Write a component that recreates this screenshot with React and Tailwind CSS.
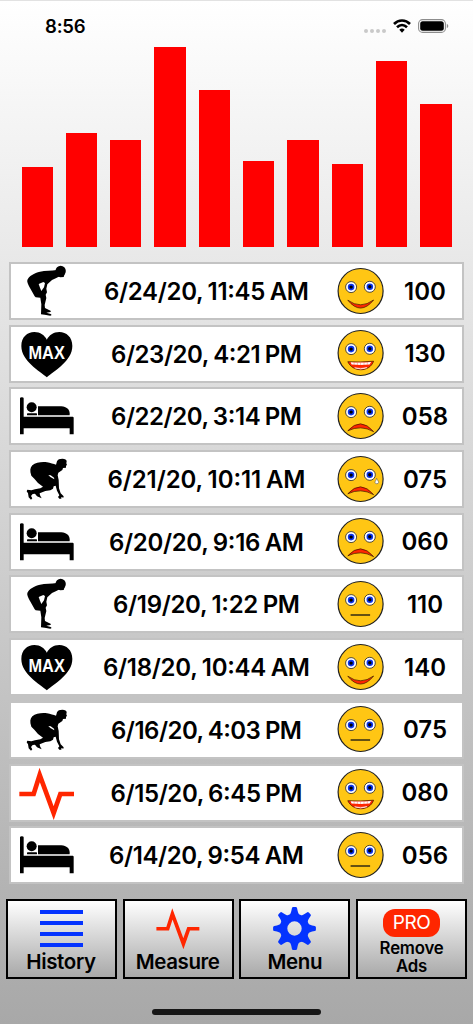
import React from 'react';

const BARS = [80, 114.5, 107.5, 200.5, 157.5, 86, 107.5, 83, 186, 143.5];

const ROWS = [
  ['bend', '6/24/20, 11:45 AM', 'smile', '100', 205],
  ['max', '6/23/20, 4:21 PM', 'grin', '130', 191],
  ['bed', '6/22/20, 3:14 PM', 'sad', '058', 191],
  ['crouch', '6/21/20, 10:11 AM', 'tear', '075', 198],
  ['bed', '6/20/20, 9:16 AM', 'sad', '060', 195],
  ['bend', '6/19/20, 1:22 PM', 'flat', '110', 187],
  ['max', '6/18/20, 10:44 AM', 'smile', '140', 207],
  ['crouch', '6/16/20, 4:03 PM', 'flat', '075', 191],
  ['pulse', '6/15/20, 6:45 PM', 'grin', '080', 192],
  ['bed', '6/14/20, 9:54 AM', 'flat', '056', 195],
];

function Bend() {
  return (
    <svg viewBox="57 24 165 168" className="h-14 w-[55px]">
      <circle cx="182" cy="48" r="15.5" />
      <path d="M168 57 L171 64 L181 67 L191 66 L194 57 L186 48 L170 47Z" />
      <path
        fillRule="evenodd"
        d="M170 45 C155 47 135 47 120 50 C103 54 86 63 82 75 C80 82 86 91 90 99 L104 124 L107 127 L121 128 L124 148 L123 178 L134 179 L151 182 L155 180 L152 177 L139 173 L151 171 L153 168 L135 159 L134 150 L139 129 L137 119 L141 112 L139 101 L142 88 L156 75 L169 69 L180 63 L176 46Z M116 87 L130 81 L135 84 L132 97 L124 108 L120 98Z"
      />
    </svg>
  );
}

function Crouch() {
  return (
    <svg viewBox="57 18 165 168" className="h-14 w-[55px]">
      <path d="M171 49 C173 43 179 41 187 41 C195 41 200 44 200 49 L199 55 L201 60 L198 62 L198 68 L189 69 L187 75 L175 83 L173 91 L176 105 L177 130 L182 145 L191 154 L190 158 L184 156 L184 161 L178 161 L174 156 L178 151 L171 137 L167 122 L161 124 L159 131 L151 136 L136 138 L119 145 L120 151 L125 160 L111 154 L105 146 L98 147 L93 153 L97 160 L93 164 L86 157 L84 145 L80 139 L82 134 L94 136 L105 133 L121 130 L129 125 L114 114 L103 101 L94 92 C89 78 90 68 97 61 C107 52 127 50 141 52 C151 53 161 58 168 59Z" />
      <path d="M145 90 L152 91 L162 98 L163 103 L151 96Z" fill="#fff" />
    </svg>
  );
}

function Bed() {
  return (
    <svg viewBox="57 401 165 168" className="h-14 w-[55px]">
      <path d="M60 432 Q60 429 65.500 429 Q71 429 71 432 V487 H218 Q221 487 221 491 V540 H209 V522 H71 V540 H60Z" />
      <circle cx="95" cy="459" r="15" />
      <rect x="81" y="477" width="30" height="6" rx="2" />
      <path d="M114 456 H184 C200 457 209 466 209 477 V483 H114Z" />
    </svg>
  );
}

function Max() {
  return (
    <svg viewBox="57 213 165 168" className="h-14 w-[55px]">
      <path d="M140.500 367 C118 347 64 318 64 273 C64 246 82 231 103 231 C121 231 134 241 140.500 254 C147 241 160 231 178 231 C199 231 217 246 217 273 C217 318 163 347 140.500 367Z" />
      <text x="140" y="312" textAnchor="middle" textLength="109" lengthAdjust="spacingAndGlyphs" fill="#fff" fontSize="53" fontWeight="700" fontFamily="Liberation Sans, sans-serif">MAX</text>
    </svg>
  );
}

function Pulse({ className }) {
  return (
    <svg viewBox="57 28 165 168" className={className}>
      <path d="M58 115 H101 L119 58 L161 172 L181 115 H222" fill="none" stroke="#ff2600" strokeWidth="14" strokeMiterlimit="10" />
    </svg>
  );
}

function RowIcon({ kind }) {
  if (kind === 'bend') return <Bend />;
  if (kind === 'max') return <Max />;
  if (kind === 'bed') return <Bed />;
  if (kind === 'crouch') return <Crouch />;
  return <Pulse className="h-14 w-[55px]" />;
}

function Eye({ x, y }) {
  return (
    <g>
      <circle cx={x} cy={y} r="5.500" fill="#fff" stroke="#222" strokeWidth="0.800" />
      <circle cx={x} cy={y} r="3.300" fill="#0a33ee" />
      <circle cx={x} cy={y} r="1.700" fill="#000" />
    </g>
  );
}

function Face({ mood }) {
  return (
    <svg viewBox="-0.600 0 48 48" className="mb-px size-12">
      <circle cx="24" cy="24" r="22.500" fill="#ffc614" stroke="#222" strokeWidth="1.200" />
      <Eye x={14.5} y={20.1} />
      <Eye x={33.2} y={19.8} />
      {mood === 'smile' && (
        <path d="M11.200 33.200 Q24 42.500 37 33 Q24 49 11.200 33.200Z" fill="#ff2600" stroke="#3a1600" strokeWidth="0.700" />
      )}
      {mood === 'grin' && (
        <g>
          <path d="M11.200 32.700 Q24 33.500 37 32.200 C33 43.500 16 43.500 11.200 32.700Z" fill="#ff2600" stroke="#3a1600" strokeWidth="0.700" />
          <path d="M14 33.200 Q24 33.800 34.500 32.900 L33 35.600 Q24 36.300 15 35.600Z" fill="#fff" />
          <path d="M18 38.800 Q24 40.200 30.500 38.600 Q24 41.500 18 38.800Z" fill="#fff" stroke="#fff" strokeWidth="0.500" />
          <path d="M17.500 33 V36 M20.800 33 V36 M24 33 V36 M27.400 33 V36 M30.700 33 V36 M24 38.500 V41" stroke="#ff6a55" strokeWidth="0.500" />
        </g>
      )}
      {(mood === 'sad' || mood === 'tear') && (
        <path d="M11.200 38.800 Q24 24.500 37 39.600 Q24 32.500 11.200 38.800Z" fill="#ff2600" stroke="#3a1600" strokeWidth="0.700" />
      )}
      {mood === 'tear' && (
        <path d="M40 23.300 C39.800 25 38.400 26.200 38.400 27.400 C38.400 29.200 42 29.200 42 27.400 C42 26.200 40.700 25 40 23.300Z" fill="#fff" stroke="#555" strokeWidth="0.600" />
      )}
      {mood === 'flat' && <path d="M14 35 H33.500" stroke="#111" strokeWidth="1.300" />}
    </svg>
  );
}

function Label({ text, width }) {
  return (
    <svg className="h-8 w-[212px] overflow-visible">
      <text x="106.500" y="25" textAnchor="middle" textLength={width} fontSize="24" fontWeight="600" wordSpacing="-1" fontFamily="Inter, sans-serif">{text}</text>
    </svg>
  );
}

function Gear() {
  return (
    <svg viewBox="-21.500 -21.500 43 43" className="size-[43px]">
      <g fill="#0433ff">
        {[0, 45, 90, 135, 180, 225, 270, 315].map((a) => (
          <path key={a} d="M-5.500 -13 Q-3.500 -14.500 -2.600 -20.200 Q-2.400 -21.400 -1.200 -21.400 H1.200 Q2.400 -21.400 2.600 -20.200 Q3.500 -14.500 5.500 -13Z" transform={`rotate(${a})`} />
        ))}
      </g>
      <circle r="11" fill="none" stroke="#0433ff" strokeWidth="7.600" />
    </svg>
  );
}

const BUTTON = 'flex h-20 w-[111px] flex-col items-center border-2 border-black bg-linear-to-b from-white to-[#a9a9a9]';

export default function App() {
  return (
    <div className="flex h-[1024px] w-[473px] flex-col overflow-hidden border-t border-[#e2e2e2] bg-linear-to-b from-white to-[#a8a8a8] font-['Inter',sans-serif] text-black">
      <div className="flex h-[45px] items-start justify-between pr-[24px] pl-[45px]">
        <span className="pt-[11px] text-[18.5px] leading-7 font-semibold tracking-[-0.2px]">8:56</span>
        <div className="flex items-start pt-[18px]">
          <div className="mt-[9.5px] mr-[7px] flex gap-[2px]">
            <i className="size-1 rounded-full bg-[#c9c9c9]" />
            <i className="size-1 rounded-full bg-[#c9c9c9]" />
            <i className="size-1 rounded-full bg-[#c9c9c9]" />
            <i className="size-1 rounded-full bg-[#c9c9c9]" />
          </div>
          <svg viewBox="0 0 18 14" className="mr-[7px] h-[14px] w-[18px]" fill="none" stroke="#000" strokeWidth="2.600">
            <path d="M1 5 C5.500 0.300 12.500 0.300 17 5" />
            <path d="M4 8.300 C7 5.400 11 5.400 14 8.300" />
            <path d="M6.300 10.700 C8 9.200 10 9.200 11.700 10.700 L9 13.700Z" fill="#000" stroke="none" />
          </svg>
          <svg viewBox="0 0 31 14" className="h-[14px] w-[31px]">
            <rect x="0.600" y="0.600" width="26.800" height="12.800" rx="4" fill="none" stroke="#8d8d8d" strokeWidth="1.100" />
            <rect x="2.200" y="2.200" width="23.600" height="9.600" rx="2.500" />
            <path d="M28.800 4.800 Q30.300 5.600 30.300 7 Q30.300 8.400 28.800 9.200Z" fill="#8d8d8d" />
          </svg>
        </div>
      </div>
      <div className="flex h-[201px] items-end justify-between pr-[21.3px] pl-[21.5px]">
        {BARS.map((h, i) => (
          <div key={i} className="w-[31.2px] bg-[#ff0000]" style={{ height: h }} />
        ))}
      </div>
      <div className="mt-[15px] flex flex-col gap-[4.7px] pr-[9px] pl-[9px]">
        {ROWS.map(([icon, date, mood, rate, w]) => (
          <div key={date} className="flex h-[58px] shrink-0 items-center border-2 border-[#c3c3c3] bg-white">
            <div className="ml-[8px]"><RowIcon kind={icon} /></div>
            <div className="ml-[25.5px]"><Label text={date} width={w} /></div>
            <div className="ml-[24px]"><Face mood={mood} /></div>
            <div className="mt-px ml-[8px] w-[67px] text-center text-[24px] font-semibold">{rate}</div>
          </div>
        ))}
      </div>
      <div className="mt-[14.7px] flex gap-[5.7px] pl-[6px]">
        <div className={BUTTON}>
          <div className="mt-[9px] flex h-[37px] w-[43px] flex-col justify-between">
            <i className="h-1 bg-[#0433ff]" />
            <i className="h-1 bg-[#0433ff]" />
            <i className="h-1 bg-[#0433ff]" />
            <i className="h-1 bg-[#0433ff]" />
          </div>
          <span className="mt-[3px] mr-px text-[20.5px] leading-6 font-semibold tracking-[-0.35px]">History</span>
        </div>
        <div className={BUTTON}>
          <Pulse className="mt-[5px] h-[44px] w-[43.500px]" />
          <span className="mr-px text-[20.5px] leading-6 font-semibold tracking-[-0.4px]">Measure</span>
        </div>
        <div className={BUTTON}>
          <div className="mt-[6px]"><Gear /></div>
          <span className="text-[20.5px] leading-6 font-semibold tracking-[-0.4px]">Menu</span>
        </div>
        <div className={BUTTON}>
          <div className="mt-[8px] flex h-[28.500px] w-[57.500px] items-center justify-center rounded-[12px] bg-[#ff2600] text-[19px] tracking-[-0.5px] text-white">PRO</div>
          <span className="mt-[2px] text-center text-[16.8px] leading-[18px] font-semibold tracking-[-0.2px]">Remove<br />Ads</span>
        </div>
      </div>
      <div className="mt-[30px] h-[6px] w-[169px] shrink-0 self-center rounded-full bg-[#171717]" />
    </div>
  );
}
